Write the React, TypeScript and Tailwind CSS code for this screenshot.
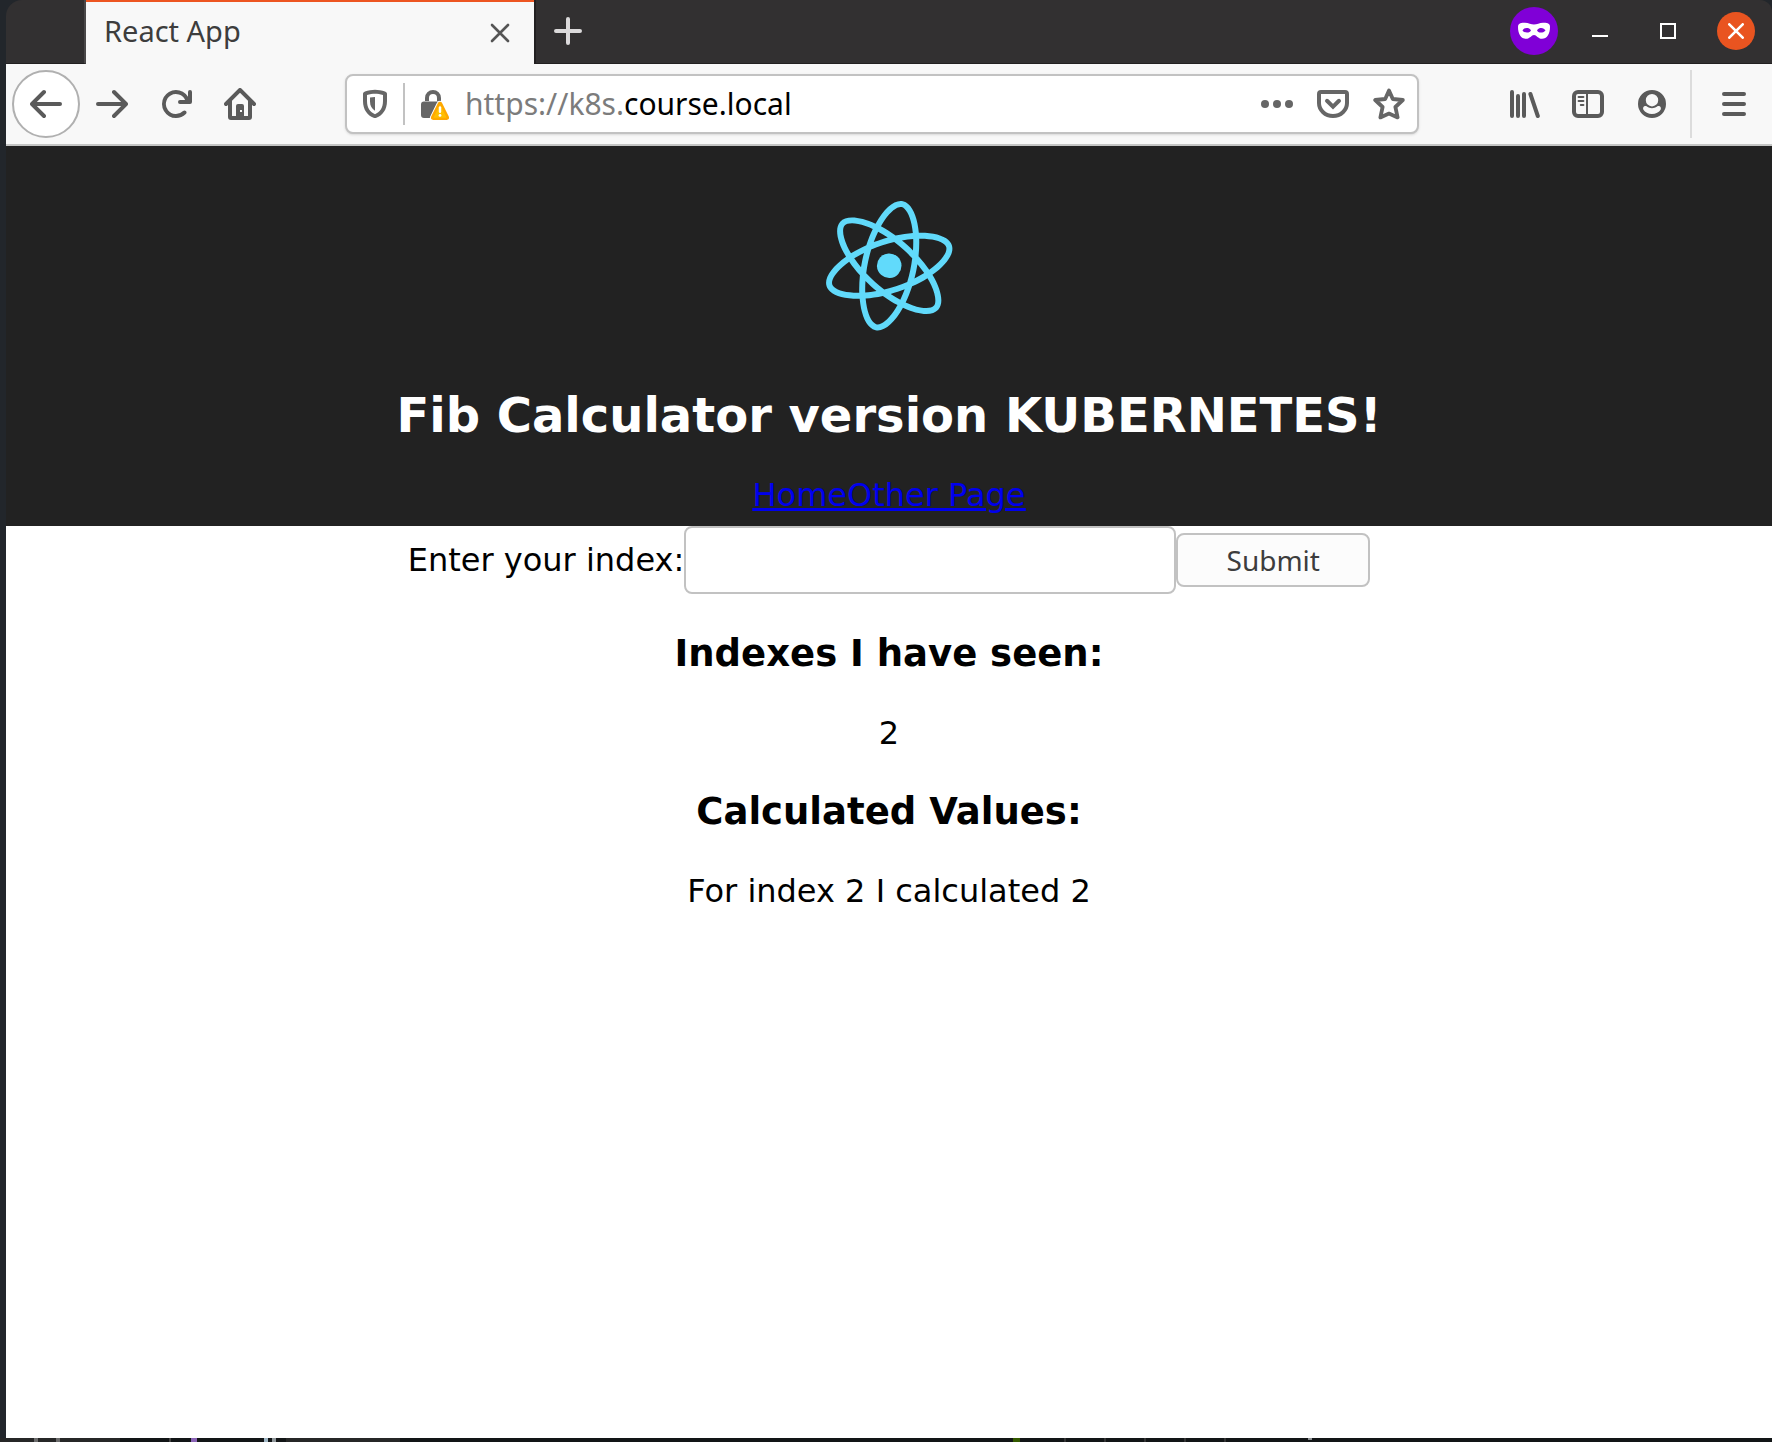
import type { ReactNode } from "react";

function Icon({ children, className = "size-8" }: { children: ReactNode; className?: string }) {
  return (
    <svg viewBox="0 0 16 16" fill="currentColor" aria-hidden="true" className={`${className} shrink-0`}>
      {children}
    </svg>
  );
}

const ARROW =
  "M15 7H3.414l4.293-4.293a1 1 0 0 0-1.414-1.414l-6 6a1 1 0 0 0 0 1.414l6 6a1 1 0 0 0 1.414-1.414L3.414 9H15a1 1 0 0 0 0-2z";

function TabStrip() {
  return (
    <div className="flex h-16 overflow-hidden rounded-tl-2xl rounded-tr-xl bg-[#323031] text-white">
      <div className="w-20 shrink-0 border-r-2 border-b border-r-[#4a4849] border-b-[#222021]" />
      <div className="flex w-[448px] shrink-0 items-center justify-between border-t-2 border-[#ed5521] bg-[#f8f8f8] pr-6 pl-[18px] text-[#3d3d3d]">
        <span className="pb-1 font-['Noto_Sans',sans-serif] text-[29px] leading-9">React App</span>
        <button aria-label="Close tab" className="text-[#555]">
          <svg viewBox="0 0 20 20" className="size-5" fill="none" stroke="currentColor" strokeWidth="2.6" strokeLinecap="round">
            <path d="M2 2l16 16M18 2L2 18" />
          </svg>
        </button>
      </div>
      <div className="flex flex-1 items-center border-b border-l-2 border-[#222021] pr-[17px] pb-px pl-[18px]">
        <button aria-label="New tab" className="text-[#dcdadb]">
          <svg viewBox="0 0 28 28" className="size-7" fill="none" stroke="currentColor" strokeWidth="4" strokeLinecap="round">
            <path d="M14 2v24M2 14h24" />
          </svg>
        </button>
        <div className="ml-auto flex size-12 items-center justify-center rounded-full bg-[#8000d7]">
          <svg viewBox="0 0 32 18" className="h-[18px] w-8" fill="#fff" fillRule="evenodd" aria-hidden="true">
            <path d="M6 .8C10 .4 13 2.6 16 2.6S22 .4 26 .8c4 .2 6 1 6 4.200 0 7-3 11.800-8 11.800-4 0-5.500-3.800-8-3.800s-4 3.800-8 3.800C3 16.800 0 12 0 5 0 1.800 2 1 6 .8zM4.500 8.500C6 10.300 7.500 10.600 9 10.600c2 0 3.500-.8 4-2.300C11.800 6.600 10.500 6 8.700 6 6.800 6 5.500 7 4.500 8.500zm23 0C26.500 7 25.200 6 23.300 6c-1.800 0-3.100.6-4.300 2.300.5 1.500 2 2.300 4 2.300 1.500 0 3-.3 4.500-2.100z" />
          </svg>
        </div>
        <button aria-label="Minimize" className="ml-[34px] flex h-3 w-4 items-end">
          <span className="h-0.5 w-full bg-white" />
        </button>
        <button aria-label="Maximize" className="ml-[52px] size-4 border-2 border-white" />
        <button aria-label="Close window" className="ml-[41px] flex size-[38px] items-center justify-center rounded-full bg-[#e95420]">
          <svg viewBox="0 0 16 16" className="size-4" fill="none" stroke="#fff" strokeWidth="2.6" strokeLinecap="round">
            <path d="M1.300 1.300l13.400 13.400M14.700 1.300L1.300 14.700" />
          </svg>
        </button>
      </div>
    </div>
  );
}

function AddressBar() {
  return (
    <div className="mx-[89px] flex h-[60px] min-w-0 flex-1 items-center rounded-lg border-2 border-[#c2c2c2] bg-white px-3 text-[#666] shadow-sm">
      <button aria-label="Tracking protection">
        <Icon>
          <path
            fillRule="evenodd"
            d="M8 .9c-1.500 0-3.500.4-5 .9-.6.2-1 .6-1 1.200v3.500c0 4.500 2.300 7.200 5.300 8.400.4.2 1 .2 1.400 0C11.700 13.700 14 11 14 6.500V3c0-.6-.4-1-1-1.200-1.500-.5-3.500-.9-5-.9zm0 2c1.200 0 2.700.2 4 .6v3c0 3.600-1.600 5.600-4 6.600-2.400-1-4-3-4-6.600v-3c1.300-.4 2.800-.6 4-.6z"
          />
          <path d="M8 4.500c-.9 0-1.700.1-2.500.3v2c0 2.200.9 3.700 2.500 4.600z" />
        </Icon>
      </button>
      <span className="mx-3 h-[42px] w-0.5 shrink-0 bg-[#c2c2c2]" />
      <button aria-label="Connection is not secure" className="ml-0.5">
        <Icon>
          <path d="M4 6.500V5a3 3 0 0 1 6 0v1.500" fill="none" stroke="currentColor" strokeWidth="2" />
          <path d="M2.500 6.800h7.500L6.500 15H2.500A1.500 1.500 0 0 1 1 13.500V8.300a1.500 1.500 0 0 1 1.500-1.500z" />
          <path d="M10.500 6.900a1.200 1.200 0 0 0-1.100.7l-3.300 6.700c-.4.9.1 1.700 1 1.700h6.800c.9 0 1.400-.8 1-1.700l-3.300-6.700a1.200 1.200 0 0 0-1.100-.7z" fill="#ffa800" stroke="#fff" strokeWidth="1" paintOrder="stroke" />
          <path d="M10.500 8.200l3.300 6.700H7.200z" fill="#ffbf00" />
          <path d="M10.500 9.700v2.200" stroke="#fff" strokeWidth="1.200" strokeLinecap="round" />
          <circle cx="10.500" cy="13.700" r=".7" fill="#fff" />
        </Icon>
      </button>
      <div className="ml-3.5 min-w-0 flex-1 font-['Noto_Sans',sans-serif] text-[30px] leading-[44px] whitespace-nowrap text-[#7c7c7c]">
        https://k8s.<span className="text-black">course.local</span>
      </div>
      <div className="flex gap-6">
        <button aria-label="Page actions">
          <Icon>
            <circle cx="2" cy="8" r="2" />
            <circle cx="8" cy="8" r="2" />
            <circle cx="14" cy="8" r="2" />
          </Icon>
        </button>
        <button aria-label="Save to Pocket">
          <Icon>
            <path d="M2 2h12a1 1 0 0 1 1 1v4.500a7 6.500 0 0 1-14 0V3a1 1 0 0 1 1-1zM5 6.400l3 2.900 3-2.900" fill="none" stroke="currentColor" strokeWidth="2" strokeLinecap="round" strokeLinejoin="miter" />
          </Icon>
        </button>
        <button aria-label="Bookmark this page">
          <Icon>
            <path d="M8 1.300l1.900 4.200 5 .5-3.700 3.500 1.100 5.200L8 12.800l-4.300 1.900 1.100-5.200L1.100 6l5-.5z" fill="none" stroke="currentColor" strokeWidth="1.900" strokeLinejoin="round" />
          </Icon>
        </button>
      </div>
    </div>
  );
}

function Toolbar() {
  return (
    <div className="flex h-[82px] items-center border-b-2 border-[#c4c5c4] bg-[#f8f8f8] pr-[22px] pl-1.5 text-[#5a5a5a]">
      <button aria-label="Back" className="flex size-[68px] shrink-0 items-center justify-center rounded-full border-2 border-[#b0b0b0] bg-white">
        <Icon>
          <path d={ARROW} />
        </Icon>
      </button>
      <div className="ml-4 flex gap-8">
        <button aria-label="Forward">
          <Icon>
            <path d={ARROW} transform="matrix(-1 0 0 1 16 0)" />
          </Icon>
        </button>
        <button aria-label="Reload">
          <Icon>
            <path d="M15 1a1 1 0 0 0-1 1v2.418A6.995 6.995 0 1 0 8 15a6.954 6.954 0 0 0 4.950-2.050 1 1 0 0 0-1.414-1.414A5.019 5.019 0 1 1 12.549 6H10a1 1 0 0 0 0 2h5a1 1 0 0 0 1-1V2a1 1 0 0 0-1-1z" />
          </Icon>
        </button>
        <button aria-label="Home">
          <Icon>
            <path
              fillRule="evenodd"
              d="M15.707 7.293l-7-7a1 1 0 0 0-1.414 0l-7 7a1 1 0 0 0 1.414 1.414L2 8.414V14.500A1.500 1.500 0 0 0 3.500 16h9a1.500 1.500 0 0 0 1.500-1.500V8.414l.293.293a1 1 0 0 0 1.414-1.414zM12 14h-2V9a1 1 0 0 0-1-1H7a1 1 0 0 0-1 1v5H4V6.414l4-4 4 4zM8 11h1v1H8z"
            />
          </Icon>
        </button>
      </div>
      <AddressBar />
      <div className="flex gap-8">
        <button aria-label="Library">
          <Icon>
            <path d="M2 2v12M5 4v10M8 3v11M11.200 3l3.700 11" fill="none" stroke="currentColor" strokeWidth="2" strokeLinecap="round" />
          </Icon>
        </button>
        <button aria-label="Sidebars">
          <Icon>
            <rect x="1" y="2" width="14" height="12" rx="2" fill="none" stroke="currentColor" strokeWidth="2" />
            <path d="M7 2h1v12H7z" />
            <path d="M3.300 4.500h2.400M3.300 6.500h2.400M4.400 8.500h1.300" stroke="currentColor" strokeWidth="1" strokeLinecap="round" />
          </Icon>
        </button>
        <button aria-label="Account">
          <Icon>
            <path
              fillRule="evenodd"
              d="M8 1a7 7 0 1 0 0 14A7 7 0 0 0 8 1zm0 2a3 3 0 1 1 0 6.200A3 3 0 0 1 8 3zm0 10c-1.900 0-3.500-.8-4.300-2.100-.4-.9 0-1.900 1-1.900.9 0 1.300 1.100 3.300 1.100S10.400 9 11.300 9c1 0 1.400 1 1 1.900C11.500 12.200 9.900 13 8 13z"
            />
          </Icon>
        </button>
      </div>
      <span className="mr-[26px] ml-[22px] h-[68px] w-0.5 shrink-0 bg-[#dcdcdc]" />
      <button aria-label="Open menu">
        <Icon>
          <path d="M3 3h10M3 8h10M3 13h10" stroke="currentColor" strokeWidth="2" strokeLinecap="round" />
        </Icon>
      </button>
    </div>
  );
}

function ReactLogo() {
  return (
    <svg viewBox="0 0 841.9 595.3" role="img" aria-label="logo" className="h-40 overflow-visible">
      <g fill="#61dafb" transform="rotate(42 420.900 297)">
        <path d="M666.3 296.5c0-32.5-40.7-63.3-103.1-82.4 14.4-63.6 8-114.2-20.2-130.4-6.5-3.8-14.1-5.6-22.4-5.6v22.3c4.6 0 8.3.9 11.4 2.6 13.6 7.8 19.5 37.5 14.9 75.7-1.1 9.4-2.9 19.3-5.1 29.4-19.6-4.8-41-8.5-63.5-10.9-13.5-18.5-27.5-35.3-41.6-50 32.6-30.3 63.2-46.9 84-46.9V78c-27.5 0-63.5 19.6-99.9 53.6-36.4-33.8-72.4-53.2-99.9-53.2v22.3c20.7 0 51.4 16.5 84 46.6-14 14.7-28 31.4-41.3 49.9-22.6 2.4-44 6.1-63.6 11-2.3-10-4-19.7-5.2-29-4.7-38.2 1.1-67.9 14.6-75.8 3-1.8 6.9-2.6 11.500-2.600V78.5c-8.4 0-16 1.8-22.600 5.600-28.1 16.2-34.4 66.7-19.9 130.1-62.2 19.2-102.7 49.9-102.7 82.3 0 32.5 40.7 63.3 103.1 82.4-14.4 63.6-8 114.2 20.2 130.4 6.5 3.8 14.1 5.6 22.5 5.6 27.5 0 63.5-19.6 99.9-53.6 36.4 33.8 72.4 53.2 99.9 53.2 8.4 0 16-1.8 22.6-5.600 28.1-16.2 34.4-66.7 19.9-130.1 62-19.1 102.5-49.9 102.5-82.3zm-130.2-66.7c-3.7 12.9-8.3 26.2-13.5 39.5-4.1-8-8.4-16-13.1-24-4.6-8-9.5-15.8-14.4-23.4 14.2 2.1 27.9 4.7 41 7.9zm-45.8 106.5c-7.8 13.5-15.8 26.3-24.1 38.2-14.9 1.3-30 2-45.2 2-15.1 0-30.2-.7-45-1.9-8.3-11.9-16.4-24.6-24.2-38-7.6-13.1-14.5-26.4-20.8-39.8 6.2-13.4 13.2-26.8 20.7-39.9 7.8-13.5 15.8-26.3 24.1-38.2 14.9-1.3 30-2 45.2-2 15.1 0 30.2.7 45 1.9 8.3 11.9 16.4 24.6 24.2 38 7.6 13.1 14.5 26.4 20.8 39.8-6.3 13.4-13.2 26.8-20.7 39.9zm32.3-13c5.4 13.4 10 26.8 13.8 39.8-13.1 3.2-26.9 5.9-41.2 8 4.9-7.7 9.8-15.6 14.4-23.7 4.6-8 8.9-16.1 13-24.1zM421.2 430c-9.3-9.6-18.6-20.3-27.8-32 9 .4 18.2.7 27.5.7 9.4 0 18.7-.2 27.8-.7-9 11.7-18.3 22.4-27.5 32zm-74.4-58.9c-14.2-2.1-27.9-4.7-41-7.9 3.7-12.9 8.3-26.2 13.5-39.5 4.1 8 8.4 16 13.1 24 4.7 8 9.5 15.8 14.4 23.4zM420.7 163c9.3 9.6 18.6 20.3 27.8 32-9-.4-18.2-.7-27.5-.7-9.400 0-18.700.2-27.800.7 9-11.700 18.300-22.400 27.500-32zm-74 58.900c-4.900 7.700-9.800 15.600-14.400 23.700-4.600 8-8.900 16-13 24-5.400-13.400-10-26.800-13.800-39.800 13.100-3.100 26.900-5.800 41.200-7.900zm-90.500 125.200c-35.400-15.100-58.300-34.900-58.300-50.600 0-15.700 22.900-35.600 58.300-50.600 8.600-3.700 18-7 27.700-10.100 5.700 19.600 13.200 40 22.500 60.900-9.200 20.800-16.600 41.100-22.200 60.600-9.900-3.100-19.300-6.500-28-10.200zM310 490c-13.600-7.800-19.500-37.500-14.900-75.700 1.100-9.400 2.900-19.300 5.100-29.400 19.600 4.800 41 8.500 63.500 10.900 13.500 18.500 27.500 35.300 41.600 50-32.600 30.300-63.200 46.900-84 46.900-4.500-.1-8.300-1-11.300-2.700zm237.200-76.200c4.700 38.200-1.100 67.900-14.600 75.800-3 1.800-6.900 2.600-11.500 2.600-20.700 0-51.400-16.500-84-46.600 14-14.700 28-31.400 41.300-49.900 22.600-2.400 44-6.100 63.600-11 2.300 10.100 4.100 19.800 5.200 29.100zm38.500-66.700c-8.600 3.700-18 7-27.700 10.100-5.700-19.600-13.200-40-22.500-60.900 9.200-20.800 16.600-41.100 22.200-60.600 9.900 3.100 19.300 6.500 28.100 10.200 35.400 15.100 58.300 34.900 58.300 50.600-.1 15.700-23 35.600-58.400 50.600z" />
        <circle cx="420.900" cy="296.500" r="45.700" />
      </g>
    </svg>
  );
}

function Page() {
  return (
    <div className="flex-1 bg-white text-center font-['DejaVu_Sans',sans-serif] text-[32px] leading-[38px] text-black">
      <header className="flex flex-col items-center bg-[#222] pt-10 pb-3 text-white">
        <ReactLogo />
        <h1 className="mt-[41px] mb-[33px] text-5xl leading-[56px] font-bold">Fib Calculator version KUBERNETES!</h1>
        <nav className="text-[#0000ee] underline">
          <a href="#home">Home</a>
          <a href="#other">Other Page</a>
        </nav>
      </header>
      <form className="flex items-center justify-center" onSubmit={(e) => e.preventDefault()}>
        <label htmlFor="index">Enter your index:</label>
        <input id="index" type="text" className="h-[68px] w-[492px] rounded-lg border-2 border-[#c2c2c2] bg-white px-4" />
        <button
          type="submit"
          className="h-[54px] w-[194px] rounded-lg border-2 border-[#c2c2c2] bg-[#fcfcfc] font-['Noto_Sans',sans-serif] text-[28px] leading-8 text-[#3d3d3d]"
        >
          Submit
        </button>
      </form>
      <h3 className="my-[38px] text-[37px] leading-[44px] font-bold">Indexes I have seen:</h3>
      <p>2</p>
      <h3 className="my-[38px] text-[37px] leading-[44px] font-bold">Calculated Values:</h3>
      <p>For index 2 I calculated 2</p>
    </div>
  );
}

/* Sliver of the desktop that shows below the window. */
function DesktopEdge() {
  return (
    <div className="flex h-1 bg-[#121516]" aria-hidden="true">
      <span className="flex w-[120px] gap-[18px] bg-[#262727] pl-[34px]">
        <span className="w-1 bg-[#6b6b6b]" />
        <span className="w-1 bg-[#6b6b6b]" />
      </span>
      <span className="ml-[49px] w-0.5 bg-[#444]" />
      <span className="ml-5 w-1.5 bg-[#8a63b5]" />
      <span className="ml-[67px] w-1 bg-[#9fb6c4]" />
      <span className="ml-1 w-1 bg-[#8f9699]" />
      <span className="ml-2.5 w-[114px] bg-[#262727]" />
      <span className="ml-[613px] w-[7px] bg-[#345a00]" />
      <span className="ml-11 flex gap-[38px]">
        <span className="w-0.5 bg-[#333]" />
        <span className="w-0.5 bg-[#333]" />
        <span className="w-0.5 bg-[#333]" />
        <span className="w-0.5 bg-[#333]" />
        <span className="w-0.5 bg-[#333]" />
      </span>
      <span className="ml-[82px] h-0.5 w-1 bg-[#8b8f92]" />
    </div>
  );
}

export default function App() {
  return (
    <div className="flex min-h-screen flex-col bg-[#22262b]">
      <div className="ml-1.5 flex flex-1 flex-col">
        <TabStrip />
        <Toolbar />
        <Page />
      </div>
      <DesktopEdge />
    </div>
  );
}
